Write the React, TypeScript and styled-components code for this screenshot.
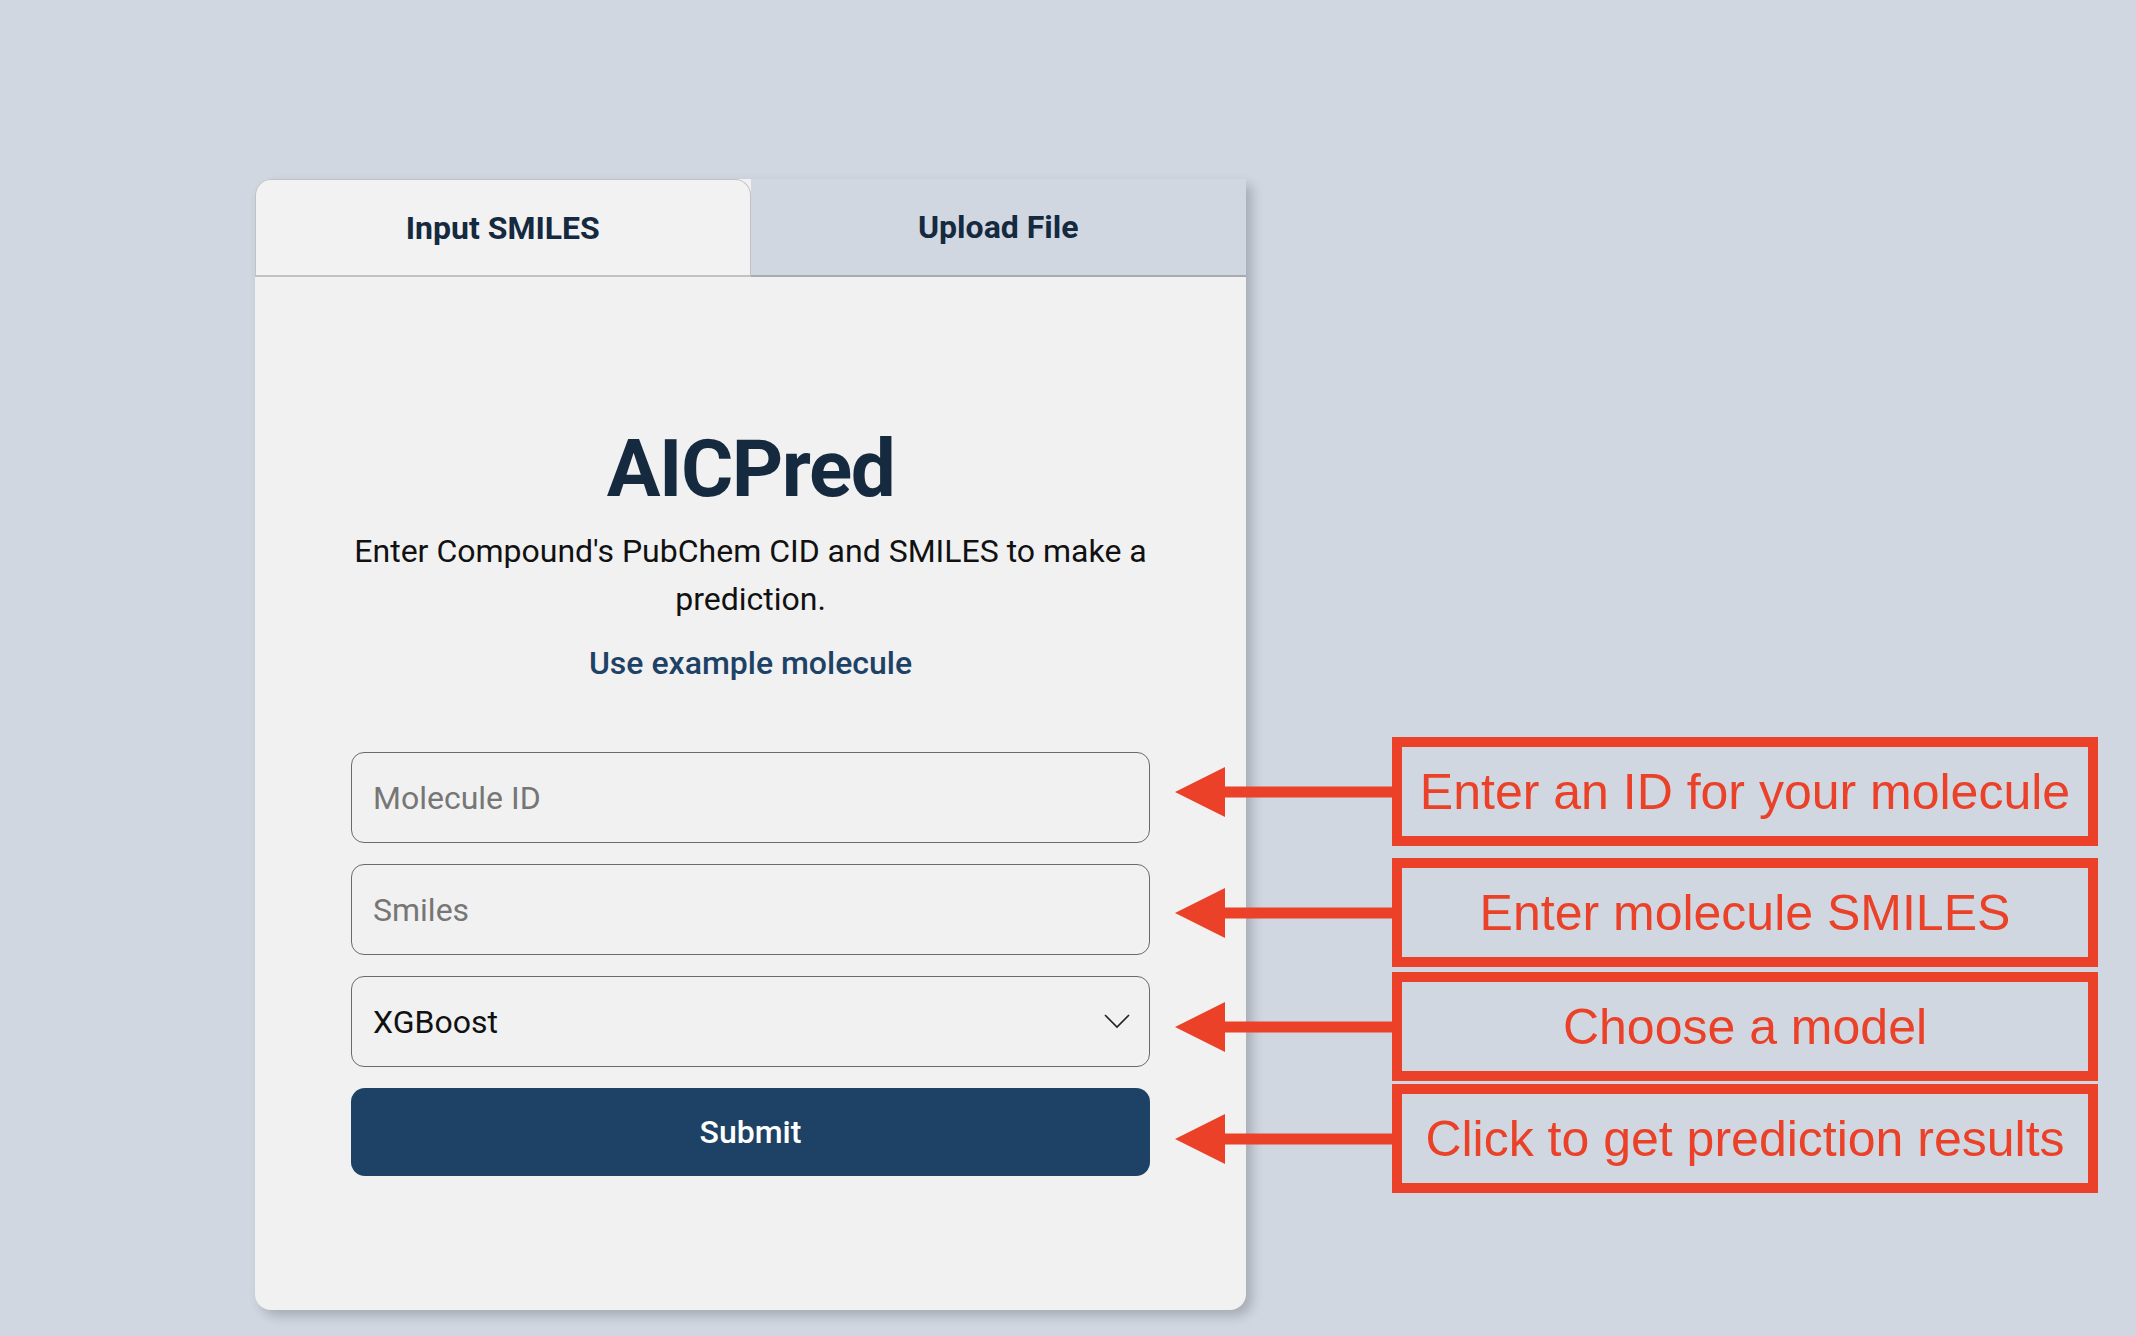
import styled, { createGlobalStyle } from 'styled-components';

const GlobalStyle = createGlobalStyle`
    html,
    body {
        margin: 0;
        padding: 0;
        background: #d0d7e1;
    }
    body {
        font-family: Roboto, 'Liberation Sans', sans-serif;
    }
    * {
        box-sizing: border-box;
    }
`;

const Page = styled.div`
    min-height: 1336px;
    display: flex;
    align-items: flex-start;
    padding: 179px 0 0 255px;
`;

const Card = styled.div`
    width: 991px;
    height: 1131px;
    display: flex;
    flex-direction: column;
    background: #f1f1f1;
    border-radius: 16px 0 16px 16px;
    box-shadow: 6px 6px 12px rgba(0, 0, 0, 0.2);
`;

const TabBar = styled.div`
    display: grid;
    grid-template-columns: 1fr 1fr;
    height: 98px;
`;

const Tab = styled.button<{ $active?: boolean }>`
    display: flex;
    align-items: center;
    justify-content: center;
    font-family: Roboto, sans-serif;
    font-size: 32px;
    font-weight: 700;
    color: #15293f;
    cursor: pointer;
    background: ${(props) => (props.$active ? '#f2f2f2' : '#d1d7e1')};
    border: ${(props) => (props.$active ? '1.5px solid #c2c2c2' : 'none')};
    border-bottom: 2px solid ${(props) => (props.$active ? '#c2c2c2' : '#a6aab2')};
    border-radius: ${(props) => (props.$active ? '16px 16px 0 0' : '0')};
`;

const Body = styled.div`
    flex: 1;
    display: flex;
    flex-direction: column;
    align-items: center;
    padding: 152px 96px 0;
`;

const Title = styled.h1`
    margin: 0;
    font-size: 80px;
    line-height: 1;
    font-weight: 700;
    letter-spacing: -1.5px;
    color: #15293f;
`;

const Desc = styled.p`
    margin: 18px 0 0;
    font-size: 32px;
    line-height: 48px;
    color: #111;
    text-align: center;
`;

const ExampleLink = styled.button`
    margin-top: 16px;
    padding: 0;
    border: none;
    background: none;
    font-family: Roboto, sans-serif;
    font-size: 32px;
    line-height: 48px;
    font-weight: 500;
    color: #1e4266;
    cursor: pointer;
`;

const Form = styled.form`
    margin-top: 65px;
    width: 100%;
    display: flex;
    flex-direction: column;
    gap: 21px;
`;

const Field = styled.input`
    height: 91px;
    width: 100%;
    padding: 0 21px;
    border: 1.5px solid #6a6a6a;
    border-radius: 13px;
    background: transparent;
    font-family: Roboto, sans-serif;
    font-size: 32px;
    color: #111;
    outline: none;
    &::placeholder {
        color: #767676;
    }
`;

const SelectWrap = styled.div`
    position: relative;
    height: 91px;
`;

const Select = styled.select`
    appearance: none;
    width: 100%;
    height: 100%;
    padding: 0 21px;
    border: 1.5px solid #6a6a6a;
    border-radius: 13px;
    background: transparent;
    font-family: Roboto, sans-serif;
    font-size: 32px;
    color: #111;
    outline: none;
`;

const Chevron = styled.svg`
    position: absolute;
    right: 20px;
    top: 38px;
    pointer-events: none;
`;

const Submit = styled.button`
    height: 88px;
    border: none;
    border-radius: 14px;
    background: #1d4265;
    color: #fff;
    font-family: Roboto, sans-serif;
    font-size: 32px;
    font-weight: 500;
    cursor: pointer;
`;

const Notes = styled.div`
    display: flex;
    flex-direction: column;
    margin: 558px 0 0 -71px;
`;

const Note = styled.div<{ $top: number }>`
    display: flex;
    align-items: center;
    margin-top: ${(props) => props.$top}px;
`;

const NoteBox = styled.div`
    width: 706px;
    height: 109px;
    border: 10px solid #ea4128;
    display: flex;
    align-items: center;
    justify-content: center;
    font-family: 'Liberation Sans', Arial, sans-serif;
    font-size: 50px;
    line-height: 1;
    color: #ea4128;
    white-space: nowrap;
`;

const Arrow = () => (
    <svg width="217" height="50" viewBox="0 0 217 50">
        <polygon points="0,25 50,0 50,50" fill="#ea4128" />
        <rect x="49" y="19.5" width="168" height="11" fill="#ea4128" />
    </svg>
);

const notes = [
    { text: 'Enter an ID for your molecule', top: 0 },
    { text: 'Enter molecule SMILES', top: 12 },
    { text: 'Choose a model', top: 5 },
    { text: 'Click to get prediction results', top: 3 },
];

export default function App() {
    return (
        <>
            <GlobalStyle />
            <Page>
                <Card>
                    <TabBar>
                        <Tab $active>Input SMILES</Tab>
                        <Tab>Upload File</Tab>
                    </TabBar>
                    <Body>
                        <Title>AICPred</Title>
                        <Desc>Enter Compound's PubChem CID and SMILES to make a prediction.</Desc>
                        <ExampleLink type="button">Use example molecule</ExampleLink>
                        <Form onSubmit={(e) => e.preventDefault()}>
                            <Field placeholder="Molecule ID" />
                            <Field placeholder="Smiles" />
                            <SelectWrap>
                                <Select defaultValue="xgboost">
                                    <option value="xgboost">XGBoost</option>
                                    <option value="rf">Random Forest</option>
                                </Select>
                                <Chevron width="26" height="15" viewBox="0 0 26 15">
                                    <polyline points="1,1 13,13 25,1" fill="none" stroke="#222" strokeWidth="1.6" />
                                </Chevron>
                            </SelectWrap>
                            <Submit type="submit">Submit</Submit>
                        </Form>
                    </Body>
                </Card>
                <Notes>
                    {notes.map((n) => (
                        <Note key={n.text} $top={n.top}>
                            <Arrow />
                            <NoteBox>{n.text}</NoteBox>
                        </Note>
                    ))}
                </Notes>
            </Page>
        </>
    );
}
